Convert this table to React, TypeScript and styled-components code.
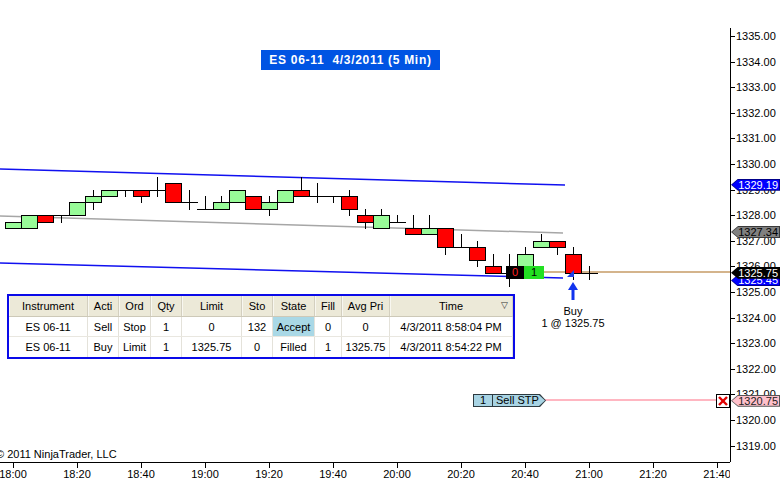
import React from "react";
import styled, { createGlobalStyle } from "styled-components";

const GlobalStyle = createGlobalStyle`
  html, body {
    margin: 0;
    padding: 0;
    background: #ffffff;
  }
  body {
    font-family: "Liberation Sans", Arial, sans-serif;
    font-size: 11px;
    color: #000;
  }
`;

// price/time scale of the chart
const yOf = (p: number) => 292 - (p - 1325) * 25.6;
const xOf = (k: number) => 13 + 16 * k;

// [open, high, low, close] per 5 min bar starting 18:00
const bars: [number, number, number, number][] = [
  [1327.5, 1327.75, 1327.5, 1327.75],
  [1327.5, 1328.0, 1327.5, 1328.0],
  [1328.0, 1328.0, 1327.75, 1327.75],
  [1328.0, 1328.0, 1327.75, 1328.0],
  [1328.0, 1328.5, 1328.0, 1328.5],
  [1328.5, 1329.0, 1328.25, 1328.75],
  [1328.75, 1329.0, 1328.75, 1329.0],
  [1329.0, 1329.0, 1328.75, 1329.0],
  [1329.0, 1329.0, 1328.5, 1328.75],
  [1329.0, 1329.5, 1328.75, 1329.0],
  [1329.25, 1329.25, 1328.5, 1328.5],
  [1328.5, 1329.0, 1328.25, 1328.5],
  [1328.25, 1328.75, 1328.25, 1328.25],
  [1328.25, 1328.75, 1328.25, 1328.5],
  [1328.5, 1329.0, 1328.5, 1329.0],
  [1328.75, 1328.75, 1328.25, 1328.25],
  [1328.25, 1328.75, 1328.0, 1328.5],
  [1328.5, 1329.0, 1328.5, 1329.0],
  [1329.0, 1329.5, 1328.75, 1328.75],
  [1328.75, 1329.25, 1328.5, 1328.75],
  [1328.75, 1328.75, 1328.5, 1328.75],
  [1328.75, 1329.0, 1328.0, 1328.25],
  [1328.0, 1328.25, 1327.5, 1327.75],
  [1327.5, 1328.25, 1327.5, 1328.0],
  [1327.75, 1328.0, 1327.75, 1327.75],
  [1327.5, 1328.0, 1327.25, 1327.25],
  [1327.25, 1328.0, 1327.25, 1327.5],
  [1327.5, 1327.5, 1326.5, 1326.75],
  [1326.75, 1327.25, 1326.75, 1326.75],
  [1326.75, 1327.0, 1326.0, 1326.25],
  [1326.0, 1326.5, 1325.75, 1325.75],
  [1325.75, 1326.5, 1325.25, 1325.75],
  [1326.0, 1326.75, 1326.0, 1326.5],
  [1326.75, 1327.25, 1326.75, 1327.0],
  [1327.0, 1327.0, 1326.5, 1326.75],
  [1326.5, 1326.75, 1325.5, 1325.75],
  [1325.75, 1326.0, 1325.5, 1325.75],
];

const priceTicks = Array.from({ length: 17 }, (_, i) => 1335 - i);
const timeTicks = ["18:00", "18:20", "18:40", "19:00", "19:20", "19:40", "20:00", "20:20", "20:40", "21:00", "21:20", "21:40"];

const orders = [
  { inst: "ES 06-11", act: "Sell", ord: "Stop", qty: "1", limit: "0", stop: "132", state: "Accept", fill: "0", avg: "0", time: "4/3/2011 8:58:04 PM", hot: true },
  { inst: "ES 06-11", act: "Buy", ord: "Limit", qty: "1", limit: "1325.75", stop: "0", state: "Filled", fill: "1", avg: "1325.75", time: "4/3/2011 8:54:22 PM", hot: false },
];

const Frame = styled.div`
  width: 784px;
  height: 487px;
  display: grid;
  grid-template-columns: 730px 54px;
  grid-template-rows: 462px 25px;
  overflow: hidden;
  background: #fff;
`;

const Plot = styled.div`
  position: relative;
  overflow: hidden;
`;

const PlotSvg = styled.svg`
  display: block;
`;

const Title = styled.div`
  position: absolute;
  left: 261px;
  top: 50px;
  width: 179px;
  height: 20px;
  background: #0054e3;
  color: #fff;
  font-weight: bold;
  font-size: 12px;
  letter-spacing: 0.7px;
  white-space: pre;
  display: flex;
  align-items: center;
  justify-content: center;
`;

const Copyright = styled.div`
  position: absolute;
  left: -4px;
  bottom: 1px;
  font-size: 11px;
  line-height: 13px;
`;

const COLS = "79px 31px 32px 31px 60px 31px 42px 27px 48px 123px";

const OrdersTable = styled.div`
  position: absolute;
  left: 7px;
  top: 294px;
  border: 2px solid #0a0ae8;
  background: #fff;
`;

const HeadRow = styled.div`
  display: grid;
  grid-template-columns: ${COLS};
  height: 21px;
  box-sizing: border-box;
  background: #ece9d8;
  border-bottom: 1px solid #cdc9b8;
`;

const HeadCell = styled.div`
  position: relative;
  display: flex;
  align-items: center;
  justify-content: center;
  border-right: 1px solid #d3cfbf;
  box-shadow: inset 1px 0 #f8f7f0;
  white-space: nowrap;
  overflow: hidden;
`;

const SortMark = styled.span`
  position: absolute;
  right: 4px;
  top: 4px;
  font-size: 9px;
  color: #333;
`;

const BodyRow = styled.div`
  display: grid;
  grid-template-columns: ${COLS};
  height: 20px;
  box-sizing: border-box;
  border-bottom: 1px solid #e9e7e0;
  &:last-child {
    border-bottom: none;
  }
`;

const BodyCell = styled.div<{ $hot?: boolean }>`
  display: flex;
  align-items: center;
  justify-content: center;
  border-right: 1px solid #e4e2da;
  background: ${(p) => (p.$hot ? "#a9d8e6" : "#fff")};
  white-space: nowrap;
  overflow: hidden;
`;

const FillBox = styled.div`
  position: absolute;
  left: 506px;
  top: 266px;
  height: 13px;
  display: flex;
  font-size: 11px;
  line-height: 13px;
`;

const FillCell = styled.div<{ $bg: string; $fg: string; $w: number }>`
  width: ${(p) => p.$w}px;
  background: ${(p) => p.$bg};
  color: ${(p) => p.$fg};
  text-align: center;
`;

const BuyNote = styled.div`
  position: absolute;
  left: 533px;
  top: 305px;
  width: 80px;
  text-align: center;
  font-size: 11px;
  line-height: 12px;
`;

const OrderTag = styled.div`
  position: absolute;
  left: 473px;
  top: 394px;
  width: 73px;
  height: 13px;
  background: #2d3a40;
  clip-path: polygon(0 0, calc(100% - 6px) 0, 100% 50%, calc(100% - 6px) 100%, 0 100%);
`;

const OrderTagInner = styled.div`
  position: absolute;
  inset: 1px;
  display: flex;
  background: #a8d4e4;
  clip-path: polygon(0 0, calc(100% - 6px) 0, 100% 50%, calc(100% - 6px) 100%, 0 100%);
  font-size: 11px;
  line-height: 11px;
`;

const TagQty = styled.div`
  width: 18px;
  text-align: center;
  border-right: 1px solid #2d3a40;
`;

const TagText = styled.div`
  padding-left: 3px;
`;

const CancelBox = styled.div`
  position: absolute;
  left: 716px;
  top: 394px;
  width: 12px;
  height: 12px;
  border: 1px solid #000;
  background: #fff;
  display: flex;
  align-items: center;
  justify-content: center;
`;

const PriceAxis = styled.div`
  position: relative;
  overflow: hidden;
`;

const Spine = styled.div`
  margin-top: 28px;
  height: 434px;
  border-left: 1px solid #000;
`;

const PriceTick = styled.div`
  position: absolute;
  left: 0;
  width: 5px;
  height: 1px;
  background: #000;
`;

const PriceLabel = styled.div`
  position: absolute;
  left: 6px;
  font-size: 11px;
  line-height: 13px;
`;

const Marker = styled.div<{ $edge: string }>`
  position: absolute;
  left: 1px;
  width: 49px;
  height: 12px;
  background: ${(p) => p.$edge};
  clip-path: polygon(0 50%, 7px 0, 100% 0, 100% 100%, 7px 100%);
`;

const MarkerInner = styled.div<{ $bg: string; $fg: string }>`
  position: absolute;
  inset: 1px;
  background: ${(p) => p.$bg};
  color: ${(p) => p.$fg};
  clip-path: polygon(0 50%, 6px 0, 100% 0, 100% 100%, 6px 100%);
  font-size: 11px;
  line-height: 10px;
  text-align: right;
  padding-right: 1px;
`;

const TimeAxis = styled.div`
  position: relative;
  border-top: 1px solid #000;
  overflow: hidden;
`;

const TimeTick = styled.div`
  position: absolute;
  top: 0;
  width: 1px;
  height: 5px;
  background: #000;
`;

const TimeLabel = styled.div`
  position: absolute;
  top: 5px;
  width: 40px;
  margin-left: -20px;
  text-align: center;
  font-size: 11px;
  line-height: 13px;
`;

const Corner = styled.div``;

function Candle({ k, bar }: { k: number; bar: [number, number, number, number] }) {
  const [o, h, l, c] = bar;
  const x = xOf(k);
  const top = Math.round(yOf(Math.max(o, c)));
  const bot = Math.round(yOf(Math.min(o, c)));
  const yh = Math.round(yOf(h));
  const yl = Math.round(yOf(l));
  return (
    <g>
      {yh !== yl && <line x1={x + 0.5} x2={x + 0.5} y1={yh} y2={yl + 1} stroke="#000" />}
      {o === c ? (
        <line x1={x - 8} x2={x + 9} y1={top + 0.5} y2={top + 0.5} stroke="#000" />
      ) : (
        <rect
          x={x - 7.5}
          y={top + 0.5}
          width={16}
          height={bot - top}
          fill={c > o ? "#98fb98" : "#ff0000"}
          stroke="#000"
        />
      )}
    </g>
  );
}

function PriceMarker({ price, text, edge, bg, fg }: { price: number; text: string; edge: string; bg: string; fg: string }) {
  return (
    <Marker $edge={edge} style={{ top: yOf(price) - 6 }}>
      <MarkerInner $bg={bg} $fg={fg}>{text}</MarkerInner>
    </Marker>
  );
}

export default function App() {
  return (
    <>
      <GlobalStyle />
      <Frame>
        <Plot>
          <PlotSvg width={730} height={462} viewBox="0 0 730 462" shapeRendering="crispEdges">
            <line x1={0} y1={169} x2={565} y2={185} stroke="#1010f0" strokeWidth={1.5} shapeRendering="auto" />
            <line x1={0} y1={216} x2={563} y2={233} stroke="#a6a6a6" strokeWidth={1.5} shapeRendering="auto" />
            <line x1={0} y1={263} x2={563} y2={278} stroke="#1010f0" strokeWidth={1.5} shapeRendering="auto" />
            <line x1={544} y1={271.5} x2={730} y2={271.5} stroke="#d4b48c" strokeWidth={2} />
            <line x1={545} y1={400} x2={716} y2={400} stroke="#ffb6c1" strokeWidth={2} />
            {bars.map((b, k) => (
              <Candle key={k} k={k} bar={b} />
            ))}
            <polygon points="567,277 574,270 574,277" fill="#1f3fe8" shapeRendering="auto" />
            <polygon
              points="573,282 568,290 571.5,290 571.5,300 574.5,300 574.5,290 578,290"
              fill="#1133ee"
              shapeRendering="auto"
            />
          </PlotSvg>

          <Title>{"ES 06-11  4/3/2011 (5 Min)"}</Title>

          <FillBox>
            <FillCell $bg="#000" $fg="#ff2020" $w={18}>0</FillCell>
            <FillCell $bg="#22e022" $fg="#000" $w={20}>1</FillCell>
          </FillBox>

          <BuyNote>
            Buy
            <br />1 @ 1325.75
          </BuyNote>

          <OrdersTable>
            <HeadRow>
              <HeadCell>Instrument</HeadCell>
              <HeadCell>Acti</HeadCell>
              <HeadCell>Ord</HeadCell>
              <HeadCell>Qty</HeadCell>
              <HeadCell>Limit</HeadCell>
              <HeadCell>Sto</HeadCell>
              <HeadCell>State</HeadCell>
              <HeadCell>Fill</HeadCell>
              <HeadCell>Avg Pri</HeadCell>
              <HeadCell>
                Time<SortMark>▽</SortMark>
              </HeadCell>
            </HeadRow>
            {orders.map((o) => (
              <BodyRow key={o.time}>
                <BodyCell>{o.inst}</BodyCell>
                <BodyCell>{o.act}</BodyCell>
                <BodyCell>{o.ord}</BodyCell>
                <BodyCell>{o.qty}</BodyCell>
                <BodyCell>{o.limit}</BodyCell>
                <BodyCell>{o.stop}</BodyCell>
                <BodyCell $hot={o.hot}>{o.state}</BodyCell>
                <BodyCell>{o.fill}</BodyCell>
                <BodyCell>{o.avg}</BodyCell>
                <BodyCell>{o.time}</BodyCell>
              </BodyRow>
            ))}
          </OrdersTable>

          <OrderTag>
            <OrderTagInner>
              <TagQty>1</TagQty>
              <TagText>Sell STP</TagText>
            </OrderTagInner>
          </OrderTag>

          <CancelBox>
            <svg width="10" height="10" viewBox="0 0 10 10">
              <line x1="1" y1="1" x2="9" y2="9" stroke="#e00000" strokeWidth="2.4" />
              <line x1="9" y1="1" x2="1" y2="9" stroke="#e00000" strokeWidth="2.4" />
            </svg>
          </CancelBox>

          <Copyright>© 2011 NinjaTrader, LLC</Copyright>
        </Plot>

        <PriceAxis>
          <Spine />
          {priceTicks.map((p) => (
            <React.Fragment key={p}>
              <PriceTick style={{ top: Math.round(yOf(p)) }} />
              <PriceLabel style={{ top: Math.round(yOf(p)) - 6 }}>{p.toFixed(2)}</PriceLabel>
            </React.Fragment>
          ))}
          <PriceMarker price={1329.19} text="1329.19" edge="#00008a" bg="#0000ff" fg="#fff" />
          <PriceMarker price={1327.34} text="1327.34" edge="#3a3a3a" bg="#808080" fg="#000" />
          <PriceMarker price={1325.45} text="1325.45" edge="#00008a" bg="#0000ff" fg="#fff" />
          <PriceMarker price={1325.75} text="1325.75" edge="#000" bg="#000" fg="#fff" />
          <PriceMarker price={1320.75} text="1320.75" edge="#555" bg="#ffc0cb" fg="#222" />
        </PriceAxis>

        <TimeAxis>
          {timeTicks.map((t, i) => (
            <React.Fragment key={t}>
              <TimeTick style={{ left: 13 + 64 * i }} />
              <TimeLabel style={{ left: 13 + 64 * i }}>{t}</TimeLabel>
            </React.Fragment>
          ))}
        </TimeAxis>
        <Corner />
      </Frame>
    </>
  );
}
